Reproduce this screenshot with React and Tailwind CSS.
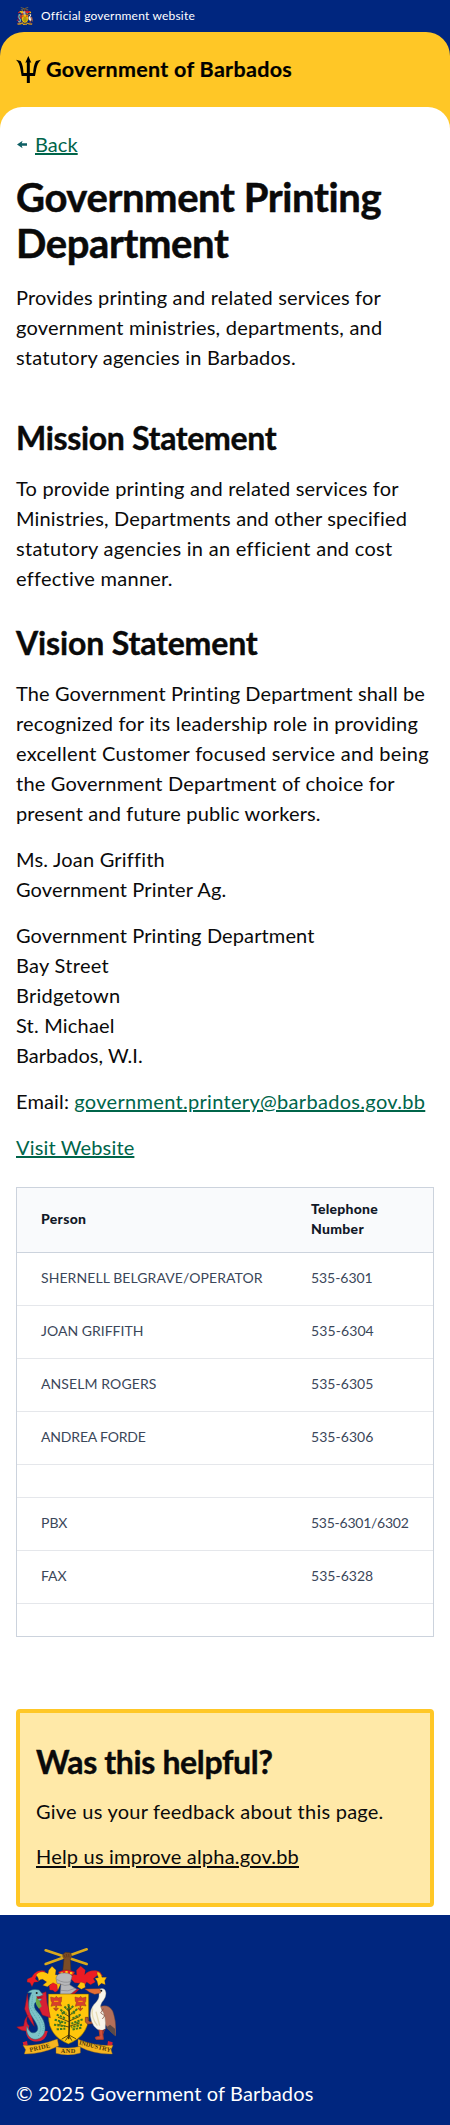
function CoatOfArms({ className }) {
  return (
    <svg className={className} viewBox="0 0 300 324" role="img" aria-label="Coat of arms of Barbados">
      {/* crossed canes, fist and arm */}
      <g stroke="#d9a91c" strokeWidth="8" strokeLinecap="round">
        <path d="M89 10 212 51M212 7 89 51" />
      </g>
      <path d="M144 36q-6-8-3-14l7-6 15 1 4 9-4 12 2 36h-25z" fill="#7a4c27" stroke="#4a2c14" strokeWidth="1.5" />
      <path d="M144 24l4 8M151 21l2 10M158 21l1 10" stroke="#4a2c14" strokeWidth="1.5" />
      {/* mantling */}
      <g stroke="#6b2a1a" strokeWidth="0.8">
        <path d="M34 96l14-6c6-14 22-24 40-18l-8 10c-14-2-20 6-22 14l10 8-14 2-6 13-6-12-9-2z" fill="#ed1c24" />
        <path d="M60 84c10-12 22-13 36-4l2-10 10-12 12 11-2 14 14 2-6 14 8 12-8 18-14-6-6-12-12 8-14-4 12-10-12-8c-6 0-10 2-12 6 0-8-2-12-8-19z" fill="#ffc60b" />
        <path d="M99 116l12-9 12 6 2 18-8 5-6-6-10-1z" fill="#ed1c24" />
        <path d="M158 78l24 6-1-14 13-13 14 12-2 14c10-12 30-16 46-8l8 12-16-2-12 10 6 10-14 8-12-8-8 14-12-10-16-2-14-14z" fill="#ed1c24" />
        <path d="M244 74c8 2 12 8 14 17l14 0-6 10 2 12-12-4-9 9-4-16-6-8 10-2c0-6-6-10-3-18z" fill="#ffc60b" />
        <path d="M194 105l12 4 2 12-12 6-12-8z" fill="#ffc60b" />
      </g>
      <path d="M127 75q24-12 50 0l-6 10h-38z" fill="#ed1c24" stroke="#5b2410" strokeWidth="1" />
      <path d="M134 76h7v7h-7zM148 72h7v8h-7zM162 75h7v7h-7z" fill="#ffc60b" />
      {/* helmet */}
      <path d="M168 122l22 5-16 15-24 2z" fill="#c5152a" />
      <path d="M120 93q4-16 26-15 20 1 22 10l-7 25 21 14-27 21q-10 3-23-4l3-33-12-2z" fill="#b6b7ba" stroke="#6d6e71" strokeWidth="1.5" />
      <path d="M122 97q22 14 44 6M135 112q10 6 27 1M135 130q20 6 42-6" fill="none" stroke="#85868a" strokeWidth="2" />
      {/* shield */}
      <path d="M97 141h121v67q0 58-61 83-60-25-60-83z" fill="#ffc60b" stroke="#6b5200" strokeWidth="1.5" />
      <g fill="#d9402b" stroke="#9a3d16" strokeWidth="1.5">
        <path d="M104 150l12 3 5-5 5 5 11-3-1 14-3 4 4 9-13-2-3 5-4-5-12 3 3-11-3-5z" />
        <path d="M177 150l12 3 5-5 5 5 11-3-1 14-3 4 4 9-13-2-3 5-4-5-12 3 3-11-3-5z" />
      </g>
      <path d="M120 178v12M193 178v12M113 183l7 7 7-7M186 183l7 7 7-7" fill="none" stroke="#b3481c" strokeWidth="4" />
      <path d="M114 163h13M187 163h13" stroke="#ffb000" strokeWidth="3" />
      {/* bearded fig tree */}
      <g fill="none" stroke="#3c3210" strokeLinecap="round">
        <path d="M158 176q4 40 0 98" strokeWidth="5" />
        <path d="M160 206l20-16M158 208l-22-14M160 222l30-13M158 224l-31-13M160 238l30-10M158 240l-33-8M159 190l10-9M158 192l-10-9" strokeWidth="2.5" />
        <path d="M158 264l-20 12M158 266l-9 14M159 264l20 11M159 266l8 14" strokeWidth="2.5" />
      </g>
      <g fill="none" stroke="#3f7a20" strokeWidth="6" strokeDasharray="7 3">
        <path d="M157 171l3 14M145 179l12 9M172 177l-10 9M133 188l18 12M184 186l-18 14M122 203l28 12M194 203l-27 12M116 218l34 10M200 217l-34 13M114 233l34 5M198 233l-32 8M122 247l26-2M196 242l-28 6M138 201l8-8M176 200l-6-8M136 225l-8 6M183 226l6 6" />
      </g>
      {/* dolphin */}
      <path d="M74 140l16-6 3 34 4 14 6 30-24-8-14-30z" fill="#d81f35" stroke="#8a1424" strokeWidth="1.5" />
      <path d="M34 140l-4 24-4 22 9 22 12 20 8 10-17-64z" fill="#d81f35" stroke="#8a1424" strokeWidth="1.5" />
      <path d="M36 205q-10 20 4 32l-10 15q-16 0-28-12l21-3q2-22 13-32z" fill="#d81f35" stroke="#8a1424" strokeWidth="1.5" />
      <path d="M30 238q-4 38 22 45 38 6 43-31l-14 0q-8 14-24 12-18-4-19-26z" fill="#d81f35" />
      <path d="M35 137q12-14 34-8l12 14-15 8 12 7-21 9q-8 14 12 33c18 20 24 48 12 65-10 14-33 18-44 0-6-10-6-20-4-28 6 20 17 24 27 18 14-10-2-31-15-51-10-18-9-48 2-67z" fill="#7cc3c9" stroke="#2c6e75" strokeWidth="1.5" />
      <path d="M43 143l-4 18 1 17 13 23 18 28 4 17-9 23M50 145l-3 31 20 29 16 31-3 20" fill="none" stroke="#3b8d8b" strokeWidth="1.5" strokeDasharray="3 3" />
      <path d="M61 150q-6 22 8 35l8-7-7-17z" fill="#68a847" />
      <path d="M61 148l22 1-18 8z" fill="#a31424" />
      <circle cx="62" cy="138" r="3" fill="#202020" />
      {/* pelican */}
      <path d="M208 211l8 0 1 10 6 3 15-2 2 7-25 3-7-7z" fill="#b25a3c" stroke="#572819" strokeWidth="1.5" />
      <path d="M250 180q26-12 40 12 12 32 9 75l-14-12-25-32z" fill="#b3705a" stroke="#6b4436" strokeWidth="1.5" />
      <path d="M270 242l28 25-1-22-15-12z" fill="#5b4a47" />
      <path d="M250 126q18-5 20 12 1 13-12 28-8 12-1 22 14 18 11 58l-14 6q-27-10-31-45-1-20 10-34 18-15 16-31z" fill="#f8f5ea" stroke="#8d8a7e" strokeWidth="1.2" />
      <path d="M230 184q-6 26 14 52M240 194l11 42" fill="none" stroke="#e6dcb4" strokeWidth="4" />
      <path d="M262 185l-8 13 12 8-7 10" fill="none" stroke="#7a4030" strokeWidth="2" />
      <path d="M207 126l45-1 2 13-18 4q-14-3-29-16z" fill="#e46d35" stroke="#8a4520" strokeWidth="1.2" />
      <circle cx="256" cy="131" r="3" fill="#151515" />
      <path d="M249 248l3 19-14 4 2 6h22l-3-28M266 246l-6 16" fill="#d1513a" stroke="#b03c2a" strokeWidth="3" />
      {/* motto ribbon */}
      <path d="M20 286l13-4 2 12-11 6zM276 282l14 4-2 14-14-4z" fill="#d81f35" />
      <g fill="#f5b420" stroke="#a06c0e" strokeWidth="1.2">
        <path d="M21 295q46 3 103-19l4 21q-53 25-103 24l4-13z" />
        <path d="M291 295q-50 4-105-18l0 20q49 26 103 24l-4-13z" />
        <path d="M120 299q37 9 73-1v20q-36 11-73 1z" />
      </g>
      <g fill="#4a350a" fontFamily="Liberation Serif, serif" fontWeight="700" fontSize="19">
        <text transform="translate(42 315) rotate(-13)" textLength="63">PRIDE</text>
        <text x="134" y="319" textLength="44">AND</text>
        <text transform="translate(188 292) rotate(14)" textLength="98">INDUSTRY</text>
      </g>
    </svg>
  );
}

function Trident() {
  return (
    <svg className="h-[27px] w-[25px] shrink-0" viewBox="0 0 75 81" aria-hidden="true">
      <path
        d="M37 0 46 20 41.500 19V51H51.500C52 38 54 25 60 15L75 11C67 18 63 27 61 38L57 60H41.500V81H32.500V60H17L13 38C11 27 8 18 0 11L14 15C20 25 22 38 22.500 51H32.500V19L28 20Z"
        fill="#000"
      />
    </svg>
  );
}

function Line({ className = "", children }) {
  return <span className={`block whitespace-nowrap ${className}`}>{children}</span>;
}

const link = "text-[#00654a] underline decoration-2 underline-offset-[1px]";
const sectionHeading = "text-[32px] leading-[39px] font-bold [-webkit-text-stroke:0.4px_#0a0a0a]";

const rows = [
  ["SHERNELL BELGRAVE/OPERATOR", "535-6301", "tracking-[0.08px]", "tracking-[-0.06px]"],
  ["JOAN GRIFFITH", "535-6304", "tracking-[0.02px]", "tracking-[0.1px]"],
  ["ANSELM ROGERS", "535-6305", "tracking-[0.1px]", "tracking-[0.05px]"],
  ["ANDREA FORDE", "535-6306", "tracking-[-0.17px]", "tracking-[0.05px]"],
  null,
  ["PBX", "535-6301/6302", "tracking-[0px]", "tracking-[-0.25px]"],
  ["FAX", "535-6328", "tracking-[0px]", "tracking-[0.02px]"],
  null,
];

function Directory() {
  return (
    <table className="mt-[25px] w-full table-fixed border-separate border-spacing-0 border border-[#ccd3dd] text-left text-[14px]">
      <colgroup>
        <col className="w-[270px]" />
        <col />
      </colgroup>
      <thead className="bg-[#f9fafc] leading-[20px] text-[#111827]">
        <tr className="h-[65px]">
          <th className="border-b border-[#ccd3dd] px-6 pt-[21px] pb-0 align-top font-black tracking-[0.3px]">Person</th>
          <th className="border-b border-[#ccd3dd] px-6 pt-[11px] pb-0 align-top font-black">
            <Line className="tracking-[0.25px]">Telephone</Line>
            <Line className="tracking-[0.3px]">Number</Line>
          </th>
        </tr>
      </thead>
      <tbody className="leading-[19px] text-[#3b475a]">
        {rows.map((row, i) => {
          const last = i === rows.length - 1;
          const edge = last ? "" : "border-b border-[#e5e7eb]";
          if (!row) {
            return (
              <tr key={i} className={last ? "h-[32px]" : "h-[33px]"}>
                <td className={`p-0 ${edge}`} />
                <td className={`p-0 ${edge}`} />
              </tr>
            );
          }
          return (
            <tr key={i} className="h-[53px]">
              <td className={`px-6 pt-[15px] pb-0 align-top whitespace-nowrap ${row[2]} ${edge}`}>{row[0]}</td>
              <td className={`px-6 pt-[15px] pb-0 align-top whitespace-nowrap ${row[3]} ${edge}`}>{row[1]}</td>
            </tr>
          );
        })}
      </tbody>
    </table>
  );
}

export default function App() {
  return (
    <div className="min-h-[2125px] w-full bg-white font-[Lato,sans-serif] text-[20px] leading-[30px] text-[#0a0a0a]">
      <header className="bg-[#00267f]">
        <div className="flex h-8 items-start gap-2 px-4 text-[12px] leading-[15px] text-white">
          <CoatOfArms className="mt-[7px] h-[18px] w-[17px]" />
          <span className="mt-2 tracking-[0.2px]">Official government website</span>
        </div>
        <div className="rounded-t-[24px] bg-[#ffc726]">
          <div className="flex h-[75px] items-start gap-[5px] px-4 pt-6">
            <Trident />
            <span className="text-[21.5px] leading-[26px] font-bold tracking-[0.3px] text-black [-webkit-text-stroke:0.2px_#000]">
              Government of Barbados
            </span>
          </div>
          <div className="h-[22px] rounded-t-[24px] bg-white" />
        </div>
      </header>

      <main className="bg-white px-4">
        <a className="flex h-[30px] items-center text-[#00654a]" href="#back">
          <svg className="mr-2 ml-[1px] h-[9px] w-[10px]" viewBox="0 0 10 9" aria-hidden="true">
            <path d="M0 4.500 5.600 .7 4.700 3.300H10V5.700H4.700L5.600 8.300Z" fill="#0e5f64" />
          </svg>
          <span className={`tracking-[0.07px] ${link}`}>Back</span>
        </a>

        <h1 className="mt-[15px] text-[40px] leading-[46px] font-bold tracking-[-0.4px] [-webkit-text-stroke:0.5px_#0a0a0a]">
          <Line>Government Printing</Line>
          <Line>Department</Line>
        </h1>
        <p className="mt-4">
          <Line className="tracking-[0.18px]">Provides printing and related services for</Line>
          <Line className="tracking-[0.22px]">government ministries, departments, and</Line>
          <Line className="tracking-[0.21px]">statutory agencies in Barbados.</Line>
        </p>

        <h2 className={`mt-[46px] tracking-[-0.32px] ${sectionHeading}`}>Mission Statement</h2>
        <p className="mt-4">
          <Line className="tracking-[0.2px]">To provide printing and related services for</Line>
          <Line className="tracking-[0.165px]">Ministries, Departments and other specified</Line>
          <Line className="tracking-[0.29px]">statutory agencies in an efficient and cost</Line>
          <Line className="tracking-[0.26px]">effective manner.</Line>
        </p>

        <h2 className={`mt-[30px] tracking-[-0.15px] ${sectionHeading}`}>Vision Statement</h2>
        <p className="mt-4">
          <Line className="tracking-[0.1px]">The Government Printing Department shall be</Line>
          <Line className="tracking-[0.2px]">recognized for its leadership role in providing</Line>
          <Line className="tracking-[0.29px]">excellent Customer focused service and being</Line>
          <Line className="tracking-[0.21px]">the Government Department of choice for</Line>
          <Line className="tracking-[0.14px]">present and future public workers.</Line>
        </p>
        <p className="mt-4">
          <Line className="tracking-[0.2px]">Ms. Joan Griffith</Line>
          <Line className="tracking-[0.13px]">Government Printer Ag.</Line>
        </p>
        <p className="mt-4">
          <Line className="tracking-[0.12px]">Government Printing Department</Line>
          <Line className="tracking-[0.3px]">Bay Street</Line>
          <Line className="tracking-[0.24px]">Bridgetown</Line>
          <Line className="tracking-[0.2px]">St. Michael</Line>
          <Line className="tracking-[0.02px]">Barbados, W.I.</Line>
        </p>
        <p className="mt-4 tracking-[0.14px] whitespace-nowrap">
          Email:{" "}
          <a className={`tracking-[0.31px] ${link}`} href="mailto:government.printery@barbados.gov.bb">
            government.printery@barbados.gov.bb
          </a>
        </p>
        <p className="mt-4 tracking-[0.16px]">
          <a className={link} href="#website">Visit Website</a>
        </p>

        <Directory />

        <section className="mt-[72px] h-[198px] rounded-[4px] border-4 border-[#ffc726] bg-[#ffe9a8] px-4 pt-[29px]">
          <h2 className={`tracking-[-0.36px] ${sectionHeading}`}>Was this helpful?</h2>
          <p className="mt-[15px] tracking-[0.24px]">Give us your feedback about this page.</p>
          <p className="mt-[15px] tracking-[0.2px]">
            <a className="underline decoration-2 underline-offset-2" href="#feedback">Help us improve alpha.gov.bb</a>
          </p>
        </section>
      </main>

      <footer className="mt-2 h-[210px] bg-[#00267f] px-4 pt-8 text-white">
        <CoatOfArms className="h-[108px] w-[100px]" />
        <p className="mt-[23px] tracking-[0.14px]">© 2025 Government of Barbados</p>
      </footer>
    </div>
  );
}
